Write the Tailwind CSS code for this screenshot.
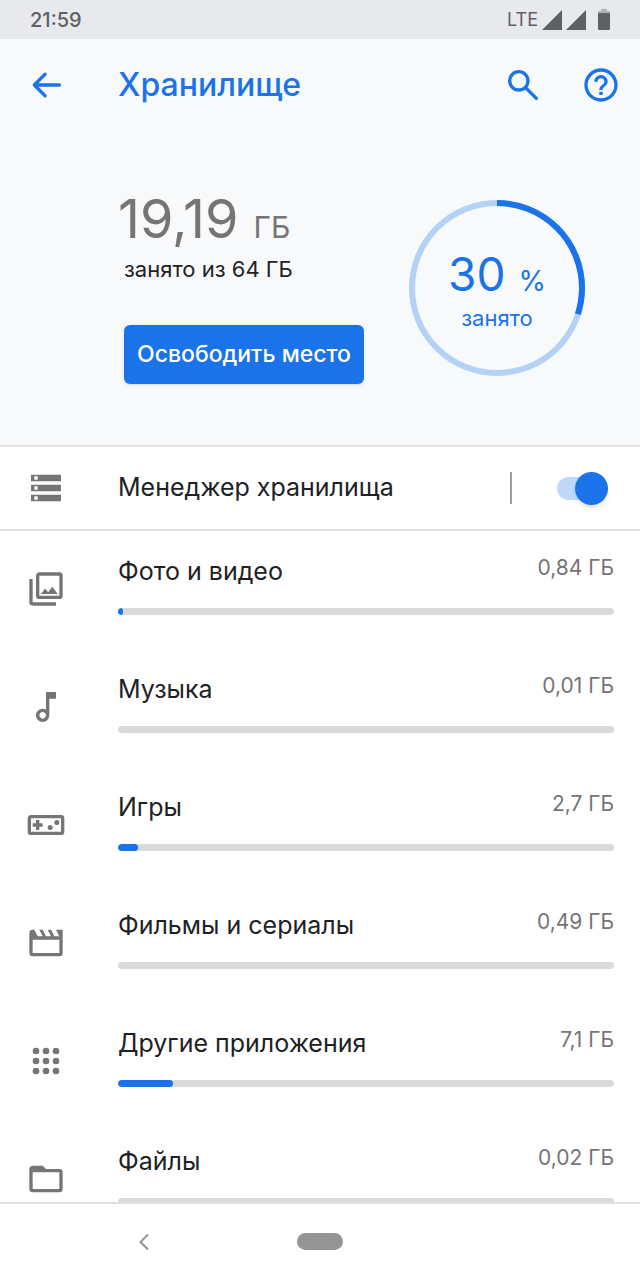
<!DOCTYPE html>
<html lang="ru">
<head>
  <meta charset="UTF-8" />
  <meta name="viewport" content="width=device-width, initial-scale=1.0"/>
  <title>Хранилище</title>
  <script src="https://cdn.jsdelivr.net/npm/@tailwindcss/browser@4"></script>
</head>
<body class="bg-white text-[#202124] font-['Inter','Roboto',sans-serif]">
  <div class="h-screen flex flex-col">

    <!-- Status bar -->
    <div class="h-[39px] shrink-0 bg-[#e8e9ec] flex items-center justify-between pl-[30px] pr-[30px] text-[#5f6062]">
      <span class="text-xl font-medium">21:59</span>
      <div class="flex items-center gap-1">
        <span class="text-lg">LTE</span>
        <svg class="size-5" viewBox="0 0 20 20" fill="currentColor"><path d="M20 0v20H0z"/></svg>
        <svg class="size-5" viewBox="0 0 20 20" fill="currentColor"><path d="M20 0v20H0z"/></svg>
        <svg class="w-3 h-[21px] ml-2" viewBox="0 0 12 21" fill="currentColor"><path d="M3 0h6v2h3v3H0V2h3z" opacity=".4"/><path d="M0 4h12v16a1 1 0 0 1-1 1H1a1 1 0 0 1-1-1z"/></svg>
      </div>
    </div>

    <main class="flex-1 min-h-0 overflow-hidden">
      <div class="bg-[#f8f9fb] border-b-2 border-[#e0e0e0] pb-[61px]">
        <!-- Toolbar -->
        <header class="h-[92px] flex items-center pl-[26px] pr-[19px] text-[#1a73e8]">
          <button type="button" aria-label="Назад">
            <svg class="size-10" viewBox="0 0 24 24" fill="none" stroke="currentColor" stroke-width="2" stroke-linecap="round" stroke-linejoin="round"><path d="M20 12H5M11.500 5.500 5 12l6.500 6.500"/></svg>
          </button>
          <h1 class="ml-[52px] flex-1 text-[32px] font-medium">Хранилище</h1>
          <button type="button" aria-label="Поиск">
            <svg class="size-10" viewBox="0 0 24 24" fill="none" stroke="currentColor" stroke-width="2" stroke-linecap="round"><circle cx="9.500" cy="9.500" r="5.500"/><path d="M14 14l6 6"/></svg>
          </button>
          <button type="button" aria-label="Справка" class="ml-[38px]">
            <svg class="size-10" viewBox="0 0 24 24" fill="currentColor"><path d="M11 18h2v-2h-2v2zm1-16C6.480 2 2 6.480 2 12s4.480 10 10 10 10-4.480 10-10S17.520 2 12 2zm0 18c-4.410 0-8-3.590-8-8s3.590-8 8-8 8 3.590 8 8-3.590 8-8 8zm0-14c-2.210 0-4 1.790-4 4h2c0-1.100.9-2 2-2s2 .9 2 2c0 2-3 1.750-3 5h2c0-2.250 3-2.500 3-5 0-2.210-1.790-4-4-4z"/></svg>
          </button>
        </header>

        <!-- Summary -->
        <section class="pt-[52px] pl-[118px] pr-[55px] flex items-start justify-between">
          <div>
            <p class="text-[54px] leading-[72px] text-[#757575]">19,19 <span class="text-[30px] leading-none">ГБ</span></p>
            <p class="ml-[6px] text-[22px] leading-7">занято из 64 ГБ</p>
            <button type="button" class="ml-[6px] mt-[42px] h-[59px] px-[13px] rounded-md bg-[#1a73e8] text-white text-[23px] font-medium shadow-sm whitespace-nowrap">Освободить место</button>
          </div>
          <div class="mt-[17px] grid place-items-center text-[#1a73e8]">
            <svg class="size-44 -rotate-90 col-start-1 row-start-1" viewBox="0 0 176 176" fill="none" stroke-width="6">
              <circle cx="88" cy="88" r="85" stroke="#b4d1f6"/>
              <circle cx="88" cy="88" r="85" stroke="#1a73e8" pathLength="100" stroke-dasharray="30 70"/>
            </svg>
            <div class="col-start-1 row-start-1 text-center">
              <p class="text-[46px] leading-[60px]">30 <span class="text-[28px] leading-none">%</span></p>
              <p class="text-[22px] leading-7">занято</p>
            </div>
          </div>
        </section>
      </div>

      <!-- Storage manager -->
      <div class="h-[84px] border-b-2 border-[#e0e0e0] flex items-center pl-[26px] pr-[32px]">
        <svg class="size-10 text-[#757575]" viewBox="0 0 24 24" fill="currentColor"><path d="M3 20h18v-4H3v4zm2-3h2v2H5v-2zM3 4v4h18V4H3zm4 3H5V5h2v2zm-4 7h18v-4H3v4zm2-3h2v2H5v-2z"/></svg>
        <label for="manager" class="ml-[52px] flex-1 text-[25px]">Менеджер хранилища</label>
        <span class="w-[2px] h-8 bg-[#9e9e9e]"></span>
        <input id="manager" type="checkbox" role="switch" checked class="appearance-none relative ml-[45px] w-[51px] h-[23px] rounded-full bg-[#bfdaf9] before:absolute before:-top-[5px] before:right-0 before:size-[33px] before:rounded-full before:bg-[#1a73e8] before:shadow-md"/>
      </div>

      <ul id="categories"></ul>
    </main>

    <!-- Navigation bar -->
    <nav class="h-[78px] shrink-0 border-t-2 border-[#e0e0e0] grid grid-cols-[1fr_auto_1fr] place-items-center text-[#949494]">
      <button type="button" aria-label="Назад">
        <svg class="size-6" viewBox="0 0 24 24" fill="none" stroke="currentColor" stroke-width="2"><path d="M16 4.500 8.500 12l7.500 7.500"/></svg>
      </button>
      <button type="button" aria-label="Домой" class="px-[10px] pb-[2px]">
        <span class="block w-[46px] h-[17px] rounded-full bg-[#949494]"></span>
      </button>
    </nav>
  </div>

  <script>
    const categories = [
      { name: 'Фото и видео', size: '0,84 ГБ', percent: 1, icon: '<path fill-rule="evenodd" d="M8 2h12a2 2 0 0 1 2 2v12a2 2 0 0 1-2 2H8a2 2 0 0 1-2-2V4c0-1.100.9-2 2-2zm0 2v12h12V4H8z"/><path d="M2 6h2v14h14v2H4a2 2 0 0 1-2-2V6zM9 15l2.500-3.300 1.800 2.200 2.500-3.200L19 15H9z"/>' },
      { name: 'Музыка', size: '0,01 ГБ', percent: 0, icon: '<path d="M12 3l.01 10.550c-.59-.34-1.270-.55-2-.55C7.790 13 6 14.790 6 17s1.790 4 4.010 4S14 19.210 14 17V7h4V3h-6zm-1.990 16c-1.100 0-2-.9-2-2s.9-2 2-2 2 .9 2 2-.9 2-2 2z"/>' },
      { name: 'Игры', size: '2,7 ГБ', percent: 4, icon: '<path fill-rule="evenodd" d="M3 6h18a2 2 0 0 1 2 2v8a2 2 0 0 1-2 2H3a2 2 0 0 1-2-2V8c0-1.100.9-2 2-2zm0 2v8h18V8H3z"/><path d="M6 9h2v2h2v2H8v2H6v-2H4v-2h2z"/><circle cx="14.500" cy="13.500" r="1.500"/><circle cx="18.500" cy="10.500" r="1.500"/>' },
      { name: 'Фильмы и сериалы', size: '0,49 ГБ', percent: 0, icon: '<path fill-rule="evenodd" d="M18 4l2 4h-3l-2-4h-2l2 4h-3l-2-4H8l2 4H7L5 4H4a2 2 0 0 0-2 2v12a2 2 0 0 0 2 2h16a2 2 0 0 0 2-2V4h-4zM4 10h16v8H4v-8z"/>' },
      { name: 'Другие приложения', size: '7,1 ГБ', percent: 11, icon: '<circle cx="6" cy="6" r="2"/><circle cx="12" cy="6" r="2"/><circle cx="18" cy="6" r="2"/><circle cx="6" cy="12" r="2"/><circle cx="12" cy="12" r="2"/><circle cx="18" cy="12" r="2"/><circle cx="6" cy="18" r="2"/><circle cx="12" cy="18" r="2"/><circle cx="18" cy="18" r="2"/>' },
      { name: 'Файлы', size: '0,02 ГБ', percent: 0, icon: '<path fill-rule="evenodd" d="M4 4h6l2 2h8a2 2 0 0 1 2 2v10a2 2 0 0 1-2 2H4a2 2 0 0 1-2-2V6c0-1.100.9-2 2-2zm0 4v10h16V8H4z"/>' }
    ];

    document.getElementById('categories').innerHTML = categories.map(c => `
      <li>
        <a href="#" class="h-[118px] flex items-start pl-[26px] pr-[26px]">
          <svg class="size-10 mt-[38px] shrink-0 text-[#757575]" viewBox="0 0 24 24" fill="currentColor">${c.icon}</svg>
          <div class="ml-[52px] flex-1 pt-[22px]">
            <div class="flex items-start justify-between">
              <span class="text-[25px] leading-9">${c.name}</span>
              <span class="text-[21px] leading-[30px] text-[#757575]">${c.size}</span>
            </div>
            <div class="mt-[19px] h-[7px] rounded-full bg-[#dadada] overflow-hidden">
              <div class="h-full rounded-full bg-[#1a73e8]" style="width: ${c.percent}%"></div>
            </div>
          </div>
        </a>
      </li>
    `).join('');
  </script>
</body>
</html>
